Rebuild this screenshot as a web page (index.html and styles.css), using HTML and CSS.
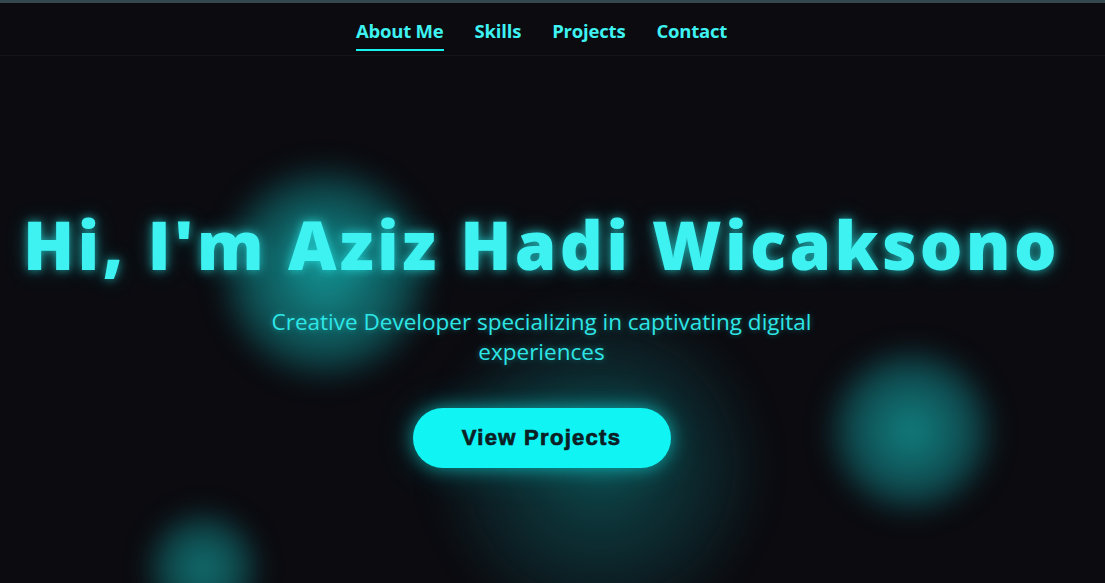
FILE: index.html
```html
<!DOCTYPE html>
<html lang="en">
<head>
<meta charset="utf-8">
<title>Aziz Hadi Wicaksono</title>
<link rel="stylesheet" href="styles.css">
</head>
<body>
<div class="page">
  <header class="topbar">
    <nav class="nav">
      <a class="nav-link active" href="#about">About Me</a>
      <a class="nav-link" href="#skills">Skills</a>
      <a class="nav-link" href="#projects">Projects</a>
      <a class="nav-link" href="#contact">Contact</a>
    </nav>
  </header>
  <main class="hero">
    <div class="orb orb-a"></div>
    <div class="orb orb-b"></div>
    <div class="orb orb-c"></div>
    <div class="orb orb-d"></div>
    <h1 class="hero-title">Hi, I'm Aziz Hadi Wicaksono</h1>
    <p class="hero-sub">Creative Developer specializing in captivating digital experiences</p>
    <a class="cta" href="#projects">View Projects</a>
  </main>
</div>
</body>
</html>
```
FILE: styles.css
```css
* { box-sizing: border-box; }
html, body {
  margin: 0;
  padding: 0;
  height: 100%;
  background: #0b0b10;
  overflow: hidden;
}
body {
  font-family: "Open Sans", "Noto Sans", sans-serif;
  color: #3ef2f2;
}
.page {
  border-top: 3px solid #34474d;
  height: 100%;
  display: flex;
  flex-direction: column;
}
.topbar {
  height: 53px;
  flex: none;
  border-bottom: 1px solid #14141a;
  display: flex;
  justify-content: center;
  padding-right: 22px;
  position: relative;
  z-index: 2;
}
.nav {
  display: flex;
  gap: 31px;
}
.nav-link {
  position: relative;
  display: flex;
  align-items: center;
  height: 48px;
  padding-top: 6px;
  color: #3ef2f2;
  text-decoration: none;
  font-weight: 700;
  font-size: 18.5px;
  letter-spacing: -0.2px;
}
.nav-link.active::after {
  content: "";
  position: absolute;
  left: 0;
  right: 0;
  bottom: 0;
  height: 2px;
  background: #17f3f3;
}
.hero {
  position: relative;
  flex: 1;
  overflow: hidden;
  display: flex;
  flex-direction: column;
  align-items: center;
  padding-top: 145px;
  padding-right: 22px;
  text-align: center;
}
.orb {
  position: absolute;
  border-radius: 50%;
  filter: blur(12px);
  z-index: 0;
}
.orb-a {
  left: 220px; top: 106px; width: 210px; height: 222px;
  background: radial-gradient(circle, rgba(22,160,160,0.9) 0%, rgba(16,115,118,0.65) 50%, rgba(16,115,118,0) 75%);
}
.orb-b {
  left: 430px; top: 240px; width: 340px; height: 340px;
  background: radial-gradient(circle, rgba(16,120,122,0.55) 0%, rgba(16,90,95,0.3) 45%, rgba(16,90,95,0) 72%);
}
.orb-c {
  left: 826px; top: 290px; width: 170px; height: 170px;
  background: radial-gradient(circle, rgba(18,135,135,0.95) 0%, rgba(16,100,104,0.7) 50%, rgba(16,100,104,0) 74%);
}
.orb-d {
  left: 146px; top: 452px; width: 114px; height: 120px;
  background: radial-gradient(circle, rgba(18,125,125,0.9) 0%, rgba(16,95,98,0.65) 50%, rgba(16,95,98,0) 74%);
}
.hero-title {
  position: relative;
  z-index: 1;
  margin: 0;
  font-family: "Open Sans", "Noto Sans", sans-serif;
  font-weight: 800;
  font-size: 67px;
  line-height: 86px;
  letter-spacing: 3.3px;
  white-space: nowrap;
  color: #3ef2f2;
  text-shadow: 0 0 10px rgba(40,240,240,0.65), 0 0 22px rgba(40,240,240,0.3);
}
.hero-sub {
  position: relative;
  z-index: 1;
  margin: 20px 0 0;
  width: 600px;
  font-size: 22.5px;
  font-weight: 500;
  line-height: 30px;
  color: #2de6e6;
  text-shadow: 0 0 6px rgba(40,230,230,0.45);
}
.cta {
  position: relative;
  z-index: 1;
  margin-top: 41px;
  width: 258px;
  height: 60px;
  flex: none;
  border-radius: 30px;
  background: #10f4f4;
  color: #0b2024;
  text-decoration: none;
  display: flex;
  align-items: center;
  justify-content: center;
  font-family: "Liberation Sans", Arial, sans-serif;
  font-weight: 700;
  font-size: 22px;
  letter-spacing: 1.3px;
  -webkit-text-stroke: 0.7px #0b2024;
  box-shadow: 0 0 18px rgba(16,244,244,0.55), 0 0 40px rgba(16,244,244,0.2);
}
```
